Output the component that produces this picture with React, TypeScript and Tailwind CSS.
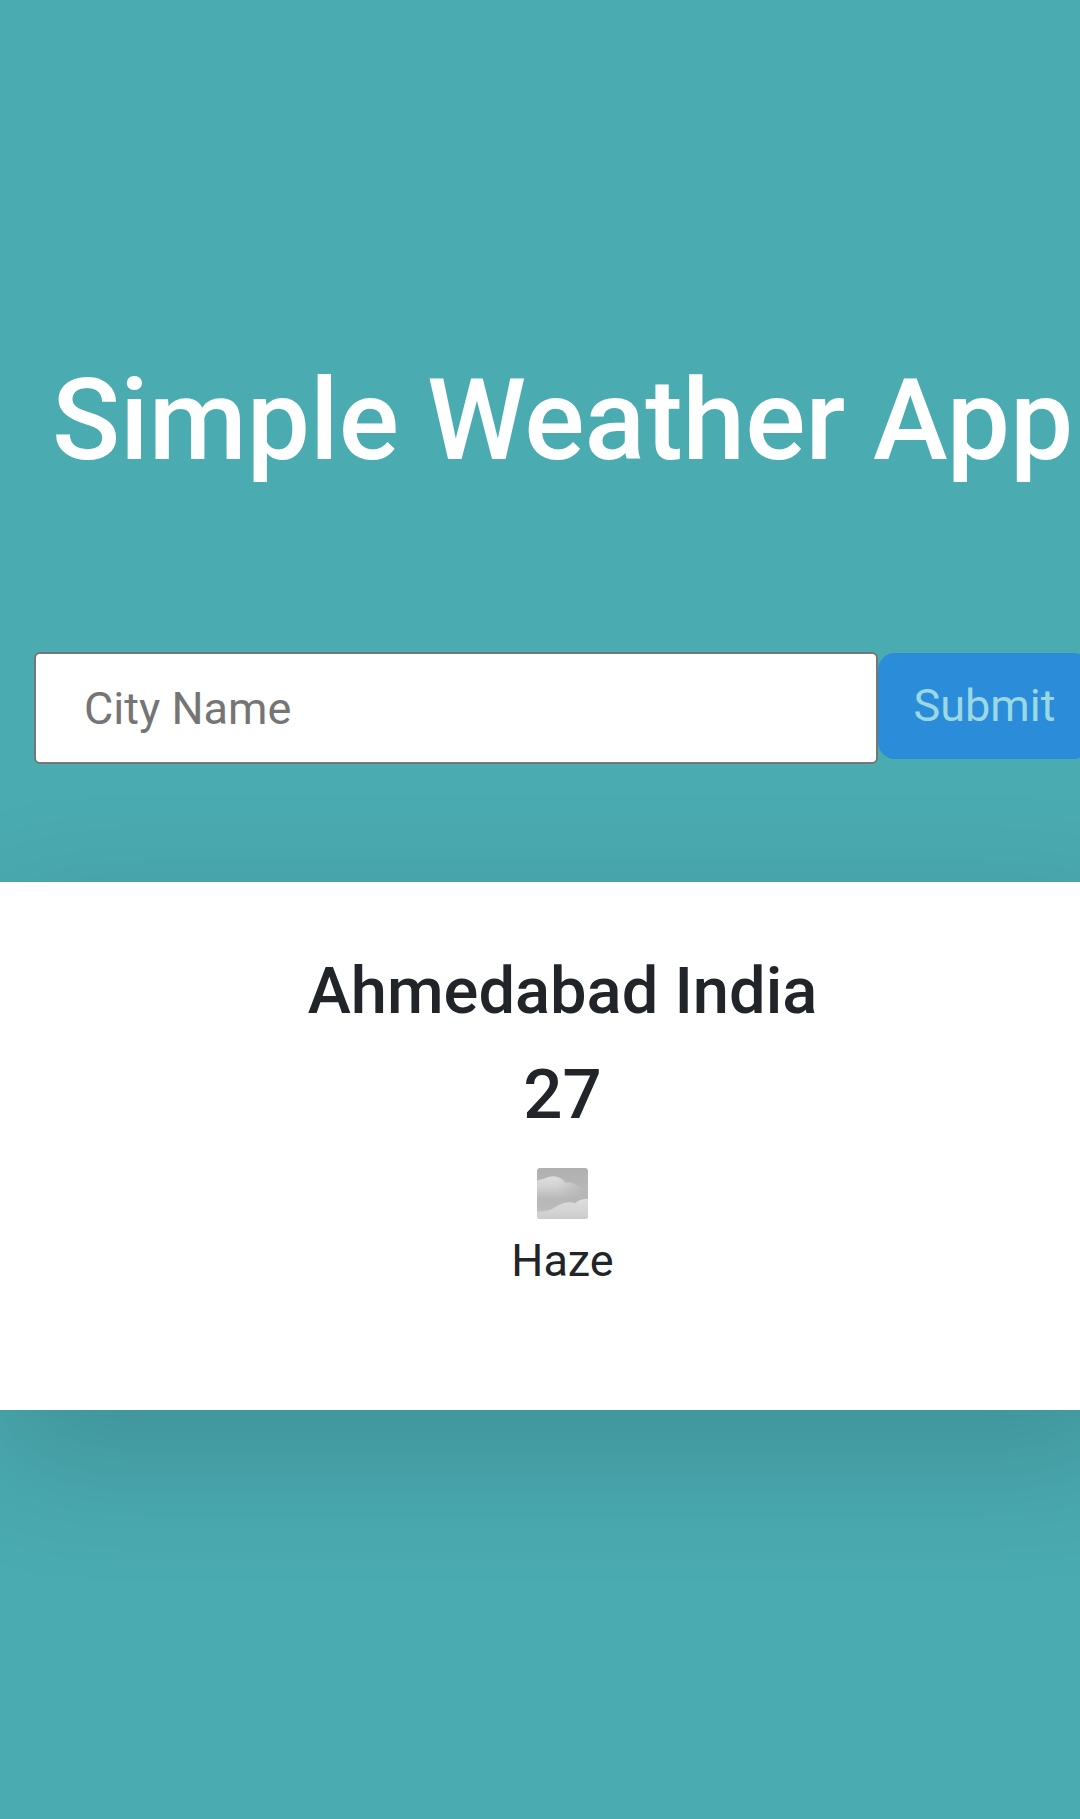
function HazeIcon() {
  return (
    <svg className="block h-[51px] w-[51px]" viewBox="0 0 52 52" aria-label="Haze">
      <defs>
        <clipPath id="tile">
          <rect width="52" height="52" rx="3" />
        </clipPath>
        <linearGradient id="sky" x1="0" y1="0" x2="0" y2="1">
          <stop offset="0" stopColor="#b0b0b0" />
          <stop offset="0.6" stopColor="#bababa" />
          <stop offset="1" stopColor="#c4c4c4" />
        </linearGradient>
        <linearGradient id="back" x1="0" y1="0" x2="0" y2="1">
          <stop offset="0" stopColor="#dedede" />
          <stop offset="0.2" stopColor="#d4d4d4" />
          <stop offset="0.5" stopColor="#b8b8b8" />
          <stop offset="0.7" stopColor="#bababa" />
          <stop offset="1" stopColor="#cccccc" />
        </linearGradient>
        <linearGradient id="front" x1="0" y1="0" x2="0" y2="1">
          <stop offset="0" stopColor="#dfdfdf" />
          <stop offset="1" stopColor="#c9c9c9" />
        </linearGradient>
        <linearGradient id="shade" x1="0" y1="0" x2="1" y2="0">
          <stop offset="0.4" stopColor="#b4b4b4" stopOpacity="0" />
          <stop offset="0.9" stopColor="#b4b4b4" stopOpacity="0.9" />
        </linearGradient>
        <filter id="soft" x="-10%" y="-10%" width="120%" height="120%">
          <feGaussianBlur stdDeviation="0.6" />
        </filter>
      </defs>
      <g clipPath="url(#tile)">
        <rect width="52" height="52" fill="url(#sky)" />
        <g filter="url(#soft)">
          <path d="M-3 14 Q3 12 7 11 Q12 8 18 8.500 Q26 10 29 15 Q36 14 41 18 Q47 22 55 23 L55 55 L-3 55Z" fill="url(#back)" />
          <path d="M-3 14 Q3 12 7 11 Q12 8 18 8.500 Q26 10 29 15 Q36 14 41 18 Q47 22 55 23 L55 55 L-3 55Z" fill="url(#shade)" />
          <path d="M-3 44 Q10 46 20 39 Q27 35 33 35 Q36 35 39 36 Q43 31 55 31 L55 55 L-3 55Z" fill="url(#front)" />
        </g>
      </g>
    </svg>
  );
}

export default function App() {
  return (
    <div className="h-[1819px] w-full overflow-hidden bg-[#4aabb1] font-[Roboto,sans-serif] text-[#212529]">
      <h1 className="ml-[52px] pt-[352px] text-[112.5px] leading-[138px] font-medium whitespace-nowrap text-white">
        Simple Weather App
      </h1>
      <form className="mt-[162px] ml-[34px] flex w-[1100px] items-start" onSubmit={(e) => e.preventDefault()}>
        <input
          className="h-[112px] w-[844px] shrink-0 rounded-[6px] border-2 border-[#767676] bg-white pl-[48px] text-[45px] outline-none placeholder:text-[#757575] placeholder:opacity-100"
          placeholder="City Name"
        />
        <button className="mt-px h-[106px] w-[212px] shrink-0 rounded-[17px] bg-[#2b8cda] pl-px text-[45px] text-[#9ad8e4]">
          Submit
        </button>
      </form>
      <section className="mt-[118px] flex h-[527.500px] w-[1125px] flex-col items-center bg-white pt-[69px] shadow-[0_42px_128px_rgba(0,0,0,0.16)]">
        <h2 className="text-[65px] leading-[80px] font-medium whitespace-nowrap">Ahmedabad India</h2>
        <p className="mt-[22px] text-[69px] leading-[84px] font-medium">27</p>
        <div className="mt-[31px]">
          <HazeIcon />
        </div>
        <p className="mt-[8px] text-[45px] leading-[68px]">Haze</p>
      </section>
    </div>
  );
}
